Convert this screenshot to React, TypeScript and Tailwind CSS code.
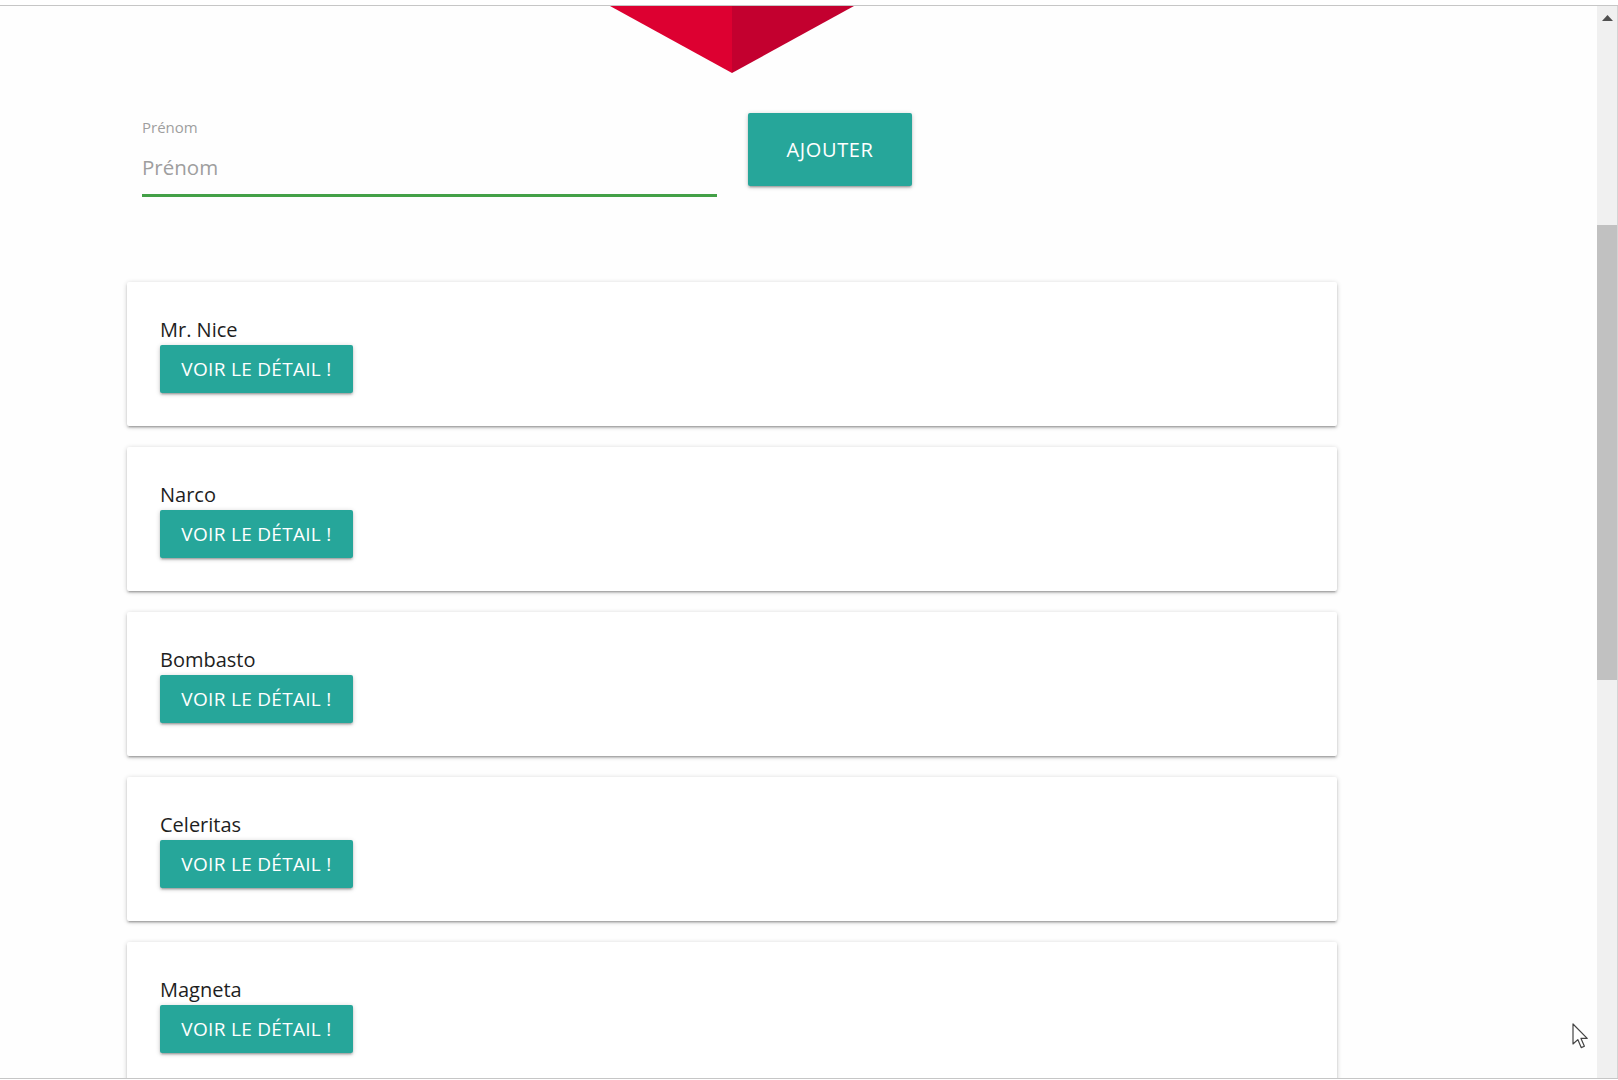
import React from 'react';

const heroes = ['Mr. Nice', 'Narco', 'Bombasto', 'Celeritas', 'Magneta'];

function HeroCard({ name }: { name: string }) {
  return (
    <div className="h-[144px] shrink-0 rounded-[2px] bg-white pl-[33px] pt-[33px] shadow-[0_2px_2px_0_rgba(0,0,0,0.14),0_3px_1px_-2px_rgba(0,0,0,0.12),0_1px_5px_0_rgba(0,0,0,0.2)]">
      <div className="text-[20px] leading-[30px] text-[#1e1e1e]">{name}</div>
      <button className="h-[48px] w-[193px] rounded-[2px] bg-[#26a69a] text-[19px] tracking-[0.3px] text-white shadow-[0_2px_2px_0_rgba(0,0,0,0.14),0_3px_1px_-2px_rgba(0,0,0,0.12),0_1px_5px_0_rgba(0,0,0,0.2)]">
        VOIR LE DÉTAIL !
      </button>
    </div>
  );
}

function App() {
  return (
    <div className="relative h-[1080px] w-[1618px] overflow-hidden bg-white font-['Open_Sans',sans-serif]">
      <div className="h-[5px]" />
      <div className="flex h-[1074px] border-y border-[#c6c6c6]">
        <main className="flex-1 overflow-hidden bg-[#fefefe]">
          <div className="ml-[127px] flex w-[1210px] flex-col">
            {/* bottom of the logo */}
            <svg className="mx-auto block" width="244" height="67" viewBox="0 0 244 67">
              <polygon points="0,0 122,0 122,67" fill="#dd0031" />
              <polygon points="122,0 244,0 122,67" fill="#c3002f" />
            </svg>

            <div className="ml-[15px] mt-[40px] flex items-start">
              <div className="w-[575px] pt-[4px]">
                <label className="block text-[15px] leading-[20px] text-[#9e9e9e]">Prénom</label>
                <input
                  placeholder="Prénom"
                  className="mt-[2px] block h-[58px] w-full border-b-[3px] border-[#43a047] bg-transparent text-[20.5px] text-[#212121] outline-none placeholder:text-[#9e9e9e]"
                />
              </div>
              <button className="ml-[31px] h-[73px] w-[164px] rounded-[2px] bg-[#26a69a] text-[20px] tracking-[0.6px] text-white shadow-[0_2px_2px_0_rgba(0,0,0,0.14),0_3px_1px_-2px_rgba(0,0,0,0.12),0_1px_5px_0_rgba(0,0,0,0.2)]">
                AJOUTER
              </button>
            </div>

            <div className="mt-[85px] flex flex-col gap-[21px]">
              {heroes.map((h) => (
                <HeroCard key={h} name={h} />
              ))}
            </div>
          </div>
        </main>

        {/* scrollbar */}
        <div className="relative flex w-[21px] flex-col border-r border-[#d4d4d4] bg-[#f0f0f0]">
          <div className="flex h-[20px] items-center justify-center pt-[4px]">
            <svg width="11" height="6" viewBox="0 0 11 6">
              <polygon points="0,6 5.5,0 11,6" fill="#505050" />
            </svg>
          </div>
          <div className="mt-[199px] h-[455px] bg-[#c1c1c1]" />
        </div>
      </div>

      {/* mouse pointer */}
      <svg className="absolute left-[1572px] top-[1023px]" width="20" height="27" viewBox="0 0 20 27">
        <path d="M1 1 L1 21 L5.8 16.6 L9.2 24.6 L12.4 23.2 L9 15.4 L15.2 15.4 Z" fill="#ffffff" stroke="#444" strokeWidth="1.2" strokeLinejoin="round" />
      </svg>
    </div>
  );
}

export default App;
